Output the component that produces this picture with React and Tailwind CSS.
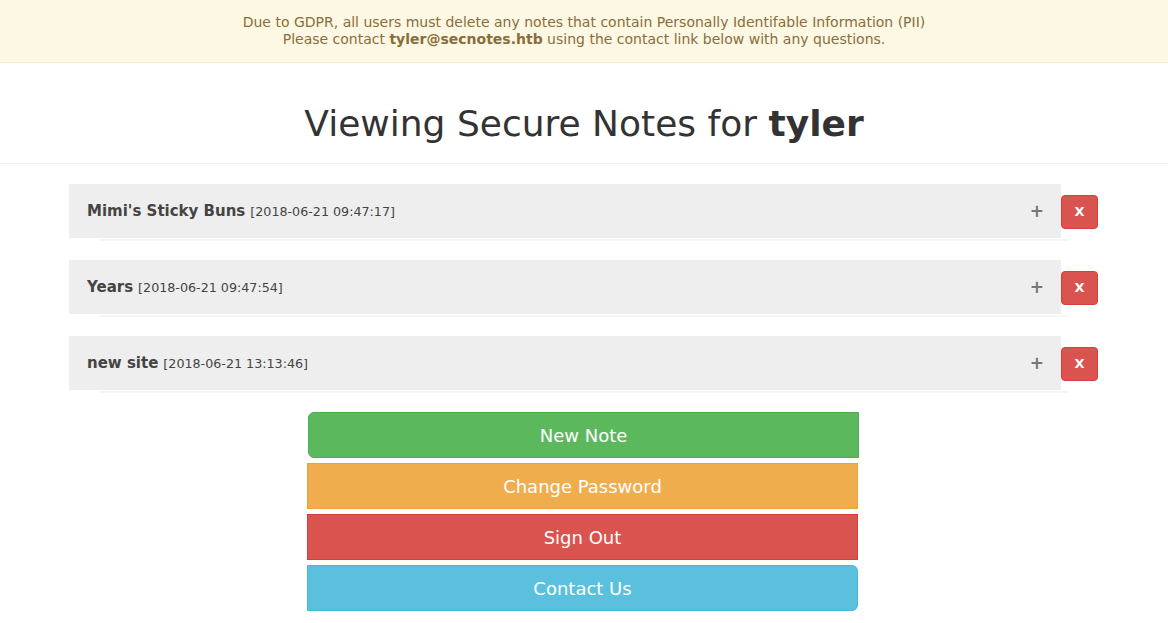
import React from "react";

const notes = [
  { title: "Mimi's Sticky Buns", date: "[2018-06-21 09:47:17]" },
  { title: "Years", date: "[2018-06-21 09:47:54]" },
  { title: "new site", date: "[2018-06-21 13:13:46]" },
];

export default function App() {
  return (
    <div className="min-h-[623px] bg-white text-[#333]" style={{ fontFamily: '"DejaVu Sans", sans-serif' }}>
      <div className="bg-[#fcf8e3] border-b border-[#faebcc] text-[#8a6d3b] text-center text-[14px] leading-[17px] pt-[14px] pb-[14px]">
        <div>Due to GDPR, all users must delete any notes that contain Personally Identifable Information (PII)</div>
        <div>
          Please contact <b>tyler@secnotes.htb</b> using the contact link below with any questions.
        </div>
      </div>

      <div className="border-b border-[#eee] pt-[41px] pb-[19px]">
        <h1 className="text-center text-[36px] leading-[40px] text-[#333]">
          Viewing Secure Notes for <b>tyler</b>
        </h1>
      </div>

      <div className="flex flex-col items-start pl-[69px] pt-[20px] gap-[19px]">
        {notes.map((n) => (
          <div key={n.title} className="flex">
            <div className="w-[992px] flex flex-col">
              <div className="h-[54px] bg-[#eee] flex items-center pl-[18px] pr-[18px]">
                <span className="text-[15px] font-bold text-[#444] mt-[1px]">{n.title}</span>
                <span className="text-[12.7px] text-[#444] ml-[5px] mt-[2px]">{n.date}</span>
                <span className="ml-auto mr-[-1px] text-[17px] font-bold text-[#777] leading-none">+</span>
              </div>
              <div className="h-[2px] ml-[30px] w-[969px] mt-[1px] bg-[#f6f6f6]" />
            </div>
            <div className="pt-[11px]">
              <button className="w-[37px] h-[34px] bg-[#d9534f] border border-[#d43f3a] rounded-[4px] text-white text-[13px] font-bold flex items-center justify-center">
                X
              </button>
            </div>
          </div>
        ))}
      </div>

      <div className="flex flex-col items-start pl-[307px] pt-[19px] gap-[5px]">
        <button className="w-[551px] h-[46px] ml-[1px] bg-[#5cb85c] border border-[#4cae4c] rounded-l-[6px] text-white text-[18px]">New Note</button>
        <button className="w-[551px] h-[46px] bg-[#f0ad4e] border border-[#eea236] text-white text-[18px]">Change Password</button>
        <button className="w-[551px] h-[46px] bg-[#d9534f] border border-[#d43f3a] text-white text-[18px]">Sign Out</button>
        <button className="w-[551px] h-[46px] bg-[#5bc0de] border border-[#46b8da] rounded-r-[6px] text-white text-[18px]">Contact Us</button>
      </div>
    </div>
  );
}
